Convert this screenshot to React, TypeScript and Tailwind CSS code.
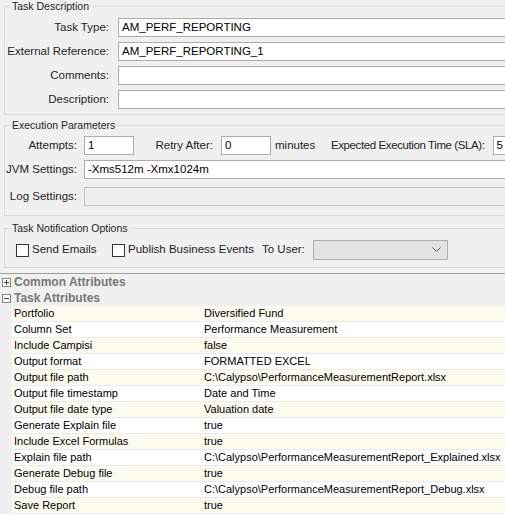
import type { ReactNode } from "react";

const rows: [string, string][] = [
  ["Portfolio", "Diversified Fund"],
  ["Column Set", "Performance Measurement"],
  ["Include Campisi", "false"],
  ["Output format", "FORMATTED EXCEL"],
  ["Output file path", "C:\\Calypso\\PerformanceMeasurementReport.xlsx"],
  ["Output file timestamp", "Date and Time"],
  ["Output file date type", "Valuation date"],
  ["Generate Explain file", "true"],
  ["Include Excel Formulas", "true"],
  ["Explain file path", "C:\\Calypso\\PerformanceMeasurementReport_Explained.xlsx"],
  ["Generate Debug file", "true"],
  ["Debug file path", "C:\\Calypso\\PerformanceMeasurementReport_Debug.xlsx"],
  ["Save Report", "true"],
];

function Group({ title, className, children }: { title: string; className?: string; children: ReactNode }) {
  return (
    <fieldset className={`ml-[4px] w-[530px] border border-[#dcdcdc] px-0 ${className ?? ""}`}>
      <legend className="ml-[6px] px-[1px] text-[10.5px] leading-[13px] text-[#1e1e1e]">{title}</legend>
      {children}
    </fieldset>
  );
}

function Label({ text, width }: { text: string; width: string }) {
  return <span className={`flex shrink-0 justify-end whitespace-nowrap ${width}`}>{text}</span>;
}

function Input({ value, className, disabled }: { value?: string; className?: string; disabled?: boolean }) {
  return (
    <div
      className={`h-[19px] shrink-0 whitespace-nowrap border px-[3px] leading-[17px] text-black ${
        disabled ? "border-[#c4c4c4] bg-[#f0f0f0]" : "border-[#adadad] bg-white"
      } ${className ?? ""}`}
    >
      {value}
    </div>
  );
}

function Checkbox({ label }: { label: string }) {
  return (
    <div className="flex items-center whitespace-nowrap">
      <div className="h-[13px] w-[13px] shrink-0 border border-[#333] bg-white" />
      <span className="ml-[3px]">{label}</span>
    </div>
  );
}

function Toggle({ open }: { open: boolean }) {
  return (
    <div className="flex h-[9px] w-[9px] items-center justify-center border border-[#888] bg-white">
      <svg width="7" height="7" viewBox="0 0 7 7">
        <line x1="1" y1="3.5" x2="6" y2="3.5" stroke="#444" strokeWidth="1" />
        {!open && <line x1="3.5" y1="1" x2="3.5" y2="6" stroke="#444" strokeWidth="1" />}
      </svg>
    </div>
  );
}

export default function App() {
  return (
    <div className="h-[514px] w-[505px] overflow-hidden bg-[#f0f0f0] text-[11.5px] text-[#1e1e1e] font-['Liberation_Sans',Arial,sans-serif]">
      <Group title="Task Description" className="pb-[5px] pt-[5px]">
        <div className="flex flex-col gap-[5px]">
          {[
            ["Task Type:", "AM_PERF_REPORTING"],
            ["External Reference:", "AM_PERF_REPORTING_1"],
            ["Comments:", ""],
            ["Description:", ""],
          ].map(([label, value]) => (
            <div key={label} className="flex items-center">
              <Label text={label} width="w-[104px]" />
              <Input value={value} className="ml-[9px] flex-1" />
            </div>
          ))}
        </div>
      </Group>

      <Group title="Execution Parameters" className="mt-[4px] pb-[9px] pt-[4px]">
        <div className="flex items-center whitespace-nowrap">
          <Label text="Attempts:" width="w-[72px]" />
          <Input value="1" className="ml-[7px] w-[50px]" />
          <Label text="Retry After:" width="w-[79px]" />
          <Input value="0" className="ml-[8px] w-[50px]" />
          <span className="ml-[4px] w-[56px]">minutes</span>
          <span className="tracking-[-0.4px]">Expected Execution Time (SLA):</span>
          <Input value="5" className="ml-[8px] w-[60px]" />
        </div>
        <div className="mt-[5px] flex items-center">
          <Label text="JVM Settings:" width="w-[72px]" />
          <Input value="-Xms512m -Xmx1024m" className="ml-[7px] flex-1" />
        </div>
        <div className="mt-[8px] flex items-center">
          <Label text="Log Settings:" width="w-[72px]" />
          <Input disabled className="ml-[7px] flex-1" />
        </div>
      </Group>

      <Group title="Task Notification Options" className="mt-[6px] pb-[7px] pt-[5px]">
        <div className="flex h-[20px] items-center pl-[11px]">
          <div className="w-[96px]">
            <Checkbox label="Send Emails" />
          </div>
          <div className="w-[150px]">
            <Checkbox label="Publish Business Events" />
          </div>
          <span className="w-[51px] whitespace-nowrap">To User:</span>
          <div className="flex h-[20px] w-[135px] items-center justify-end border border-[#adadad] bg-[#e3e3e3] pr-[6px]">
            <svg width="9" height="6" viewBox="0 0 9 6">
              <polyline points="0.5,0.5 4.5,4.5 8.5,0.5" fill="none" stroke="#555" strokeWidth="1" />
            </svg>
          </div>
        </div>
      </Group>

      <div className="mt-[5px] border-t border-[#a0a0a0]">
        <div className="flex h-[16px] items-center pl-[2px]">
          <Toggle open={false} />
          <span className="ml-[3px] text-[12px] font-bold text-[#777]">Common Attributes</span>
        </div>
        <div className="flex h-[16px] items-center pl-[2px]">
          <Toggle open />
          <span className="ml-[3px] text-[12px] font-bold text-[#777]">Task Attributes</span>
        </div>
        <div className="ml-[12px]">
          {rows.map(([name, value], i) => (
            <div
              key={name}
              className={`flex h-[16px] items-center border-b border-[#ebebeb] text-[11px] leading-[15px] text-black ${
                i % 2 === 0 ? "bg-[#fcfbf0]" : "bg-white"
              }`}
            >
              <span className="w-[192px] shrink-0 whitespace-nowrap pl-[2px]">{name}</span>
              <span className="whitespace-nowrap">{value}</span>
            </div>
          ))}
        </div>
      </div>
    </div>
  );
}
